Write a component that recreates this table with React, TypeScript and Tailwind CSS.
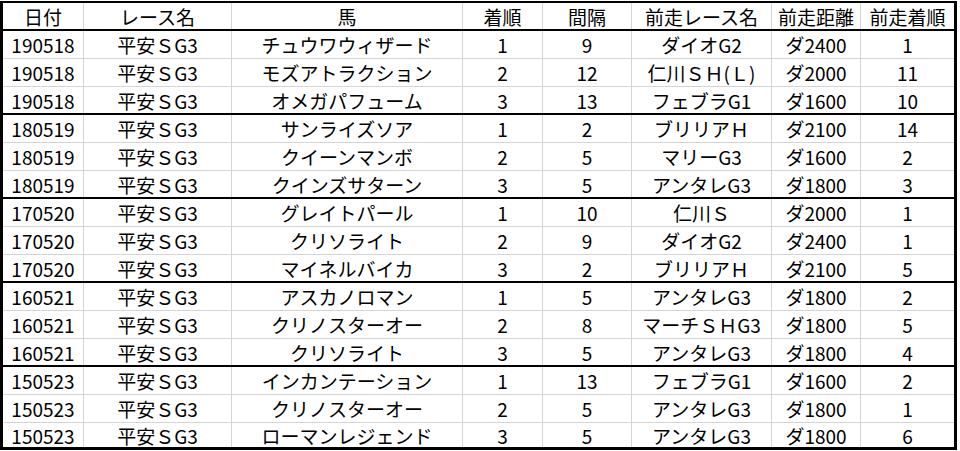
import React from "react";

const header = ["日付", "レース名", "馬", "着順", "間隔", "前走レース名", "前走距離", "前走着順"];

const rows: string[][] = [
  ["190518", "平安ＳG3", "チュウワウィザード", "1", "9", "ダイオG2", "ダ2400", "1"],
  ["190518", "平安ＳG3", "モズアトラクション", "2", "12", "仁川ＳＨ(Ｌ)", "ダ2000", "11"],
  ["190518", "平安ＳG3", "オメガパフューム", "3", "13", "フェブラG1", "ダ1600", "10"],
  ["180519", "平安ＳG3", "サンライズソア", "1", "2", "ブリリアＨ", "ダ2100", "14"],
  ["180519", "平安ＳG3", "クイーンマンボ", "2", "5", "マリーG3", "ダ1600", "2"],
  ["180519", "平安ＳG3", "クインズサターン", "3", "5", "アンタレG3", "ダ1800", "3"],
  ["170520", "平安ＳG3", "グレイトパール", "1", "10", "仁川Ｓ", "ダ2000", "1"],
  ["170520", "平安ＳG3", "クリソライト", "2", "9", "ダイオG2", "ダ2400", "1"],
  ["170520", "平安ＳG3", "マイネルバイカ", "3", "2", "ブリリアＨ", "ダ2100", "5"],
  ["160521", "平安ＳG3", "アスカノロマン", "1", "5", "アンタレG3", "ダ1800", "2"],
  ["160521", "平安ＳG3", "クリノスターオー", "2", "8", "マーチＳＨG3", "ダ1800", "5"],
  ["160521", "平安ＳG3", "クリソライト", "3", "5", "アンタレG3", "ダ1800", "4"],
  ["150523", "平安ＳG3", "インカンテーション", "1", "13", "フェブラG1", "ダ1600", "2"],
  ["150523", "平安ＳG3", "クリノスターオー", "2", "5", "アンタレG3", "ダ1800", "1"],
  ["150523", "平安ＳG3", "ローマンレジェンド", "3", "5", "アンタレG3", "ダ1800", "6"],
];

const widths = ["w-[81px]", "w-[148px]", "w-[231px]", "w-[80px]", "w-[89px]", "w-[140px]", "w-[89px]", "w-[93px]"];

function Row({
  cells,
  bottom,
}: {
  cells: string[];
  bottom: "thin" | "thick" | "none";
}) {
  const rowCls =
    bottom === "thin"
      ? "h-[28px] border-b border-[#d4d4d4]"
      : bottom === "thick"
      ? "h-[28px] border-b-2 border-black"
      : "h-[24px]";
  return (
    <div className={`flex ${rowCls}`}>
      {cells.map((c, i) => (
        <div
          key={i}
          className={`${widths[i]} shrink-0 flex items-center justify-center leading-none whitespace-nowrap ${
            i < cells.length - 1 ? "border-r border-[#d4d4d4]" : ""
          }`}
        >
          {c}
        </div>
      ))}
    </div>
  );
}

export default function App() {
  return (
    <div className="w-[960px] h-[451px] bg-white overflow-hidden">
      <div
        className="mt-[1px] w-[957px] border-t-2 border-l-[3px] border-r-[3px] border-b-[3px] border-black text-black text-[19px]"
        style={{ fontFamily: '"Noto Sans CJK JP", "Noto Sans", sans-serif' }}
      >
        <Row cells={header} bottom="thick" />
        {rows.map((r, i) => (
          <Row
            key={i}
            cells={r}
            bottom={i === rows.length - 1 ? "none" : i % 3 === 2 ? "thick" : "thin"}
          />
        ))}
      </div>
    </div>
  );
}
